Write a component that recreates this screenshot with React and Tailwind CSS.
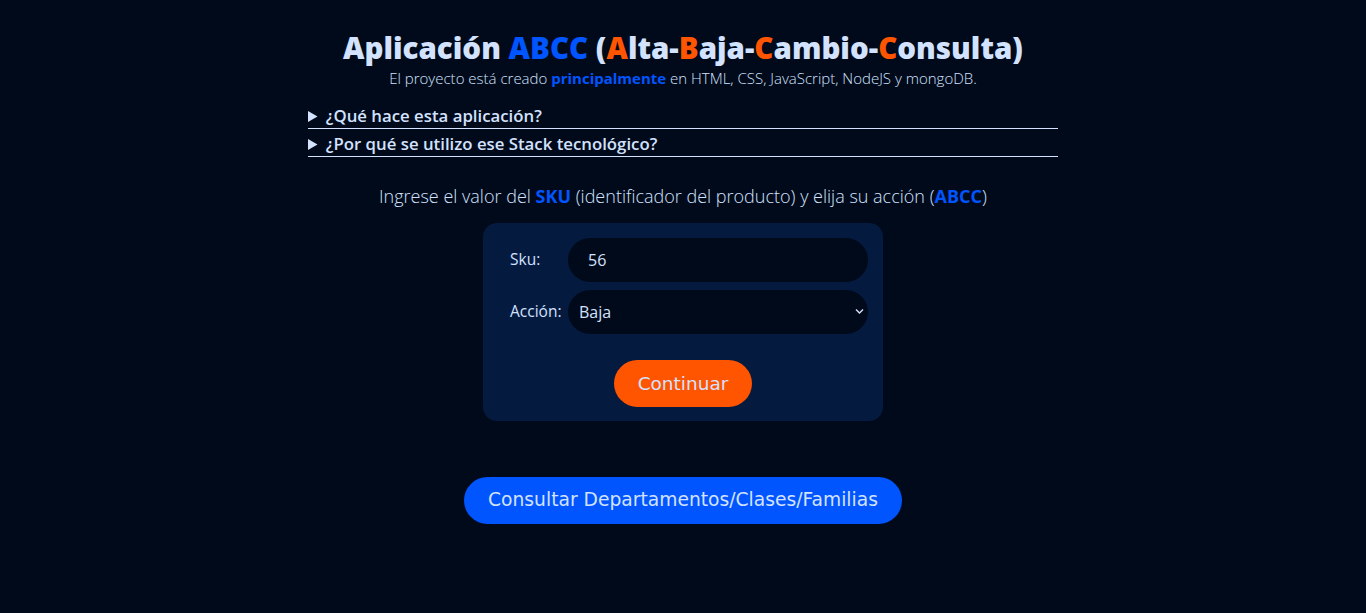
import React, { useState } from 'react';

const sans = "font-['Open_Sans','Noto_Sans',sans-serif]";
const verdana = "font-['DejaVu_Sans',Verdana,sans-serif]";

const App = () => {
    const [sku, setSku] = useState('56');
    const [accion, setAccion] = useState('Baja');

    return (
        <div className={`min-h-screen w-full bg-[#000a1a] text-[#d3e2ff] ${sans}`}>
            <div className="flex flex-col items-center pt-[28px]">
                <h1 className="text-[29.5px] font-extrabold leading-[40px]">
                    Aplicación <span className="text-[#0055ff]">ABCC</span> (
                    <span className="text-[#ff5500]">A</span>lta-
                    <span className="text-[#ff5500]">B</span>aja-
                    <span className="text-[#ff5500]">C</span>ambio-
                    <span className="text-[#ff5500]">C</span>onsulta)
                </h1>
                <p className="text-[15px] font-light leading-[20px]">
                    El proyecto está creado <b className="font-bold text-[#0055ff]">principalmente</b> en HTML, CSS, JavaScript, NodeJS y mongoDB.
                </p>

                <div className="mt-[16px] w-[750px]">
                    <details className="border-b border-[#d3e2ff]">
                        <summary className="cursor-pointer text-[16.8px] font-semibold leading-[24px]">¿Qué hace esta aplicación?</summary>
                    </details>
                    <details className="mt-[3px] border-b border-[#d3e2ff]">
                        <summary className="cursor-pointer text-[16.8px] font-semibold leading-[24px]">¿Por qué se utilizo ese Stack tecnológico?</summary>
                    </details>
                </div>

                <p className="mt-[27px] text-[18px] font-light leading-[24px]">
                    Ingrese el valor del <b className="font-bold text-[#0055ff]">SKU</b> (identificador del producto) y elija su acción (<b className="font-bold text-[#0055ff]">ABCC</b>)
                </p>

                <div className="mt-[15px] flex w-[400px] flex-col rounded-[14px] bg-[#051a3f] pl-[27px] pr-[15px] pt-[15px] pb-[14px]">
                    <div className="flex items-center">
                        <label className="w-[58px] text-[15.5px]">Sku:</label>
                        <input
                            value={sku}
                            onChange={e => setSku(e.target.value)}
                            className="h-[44px] flex-1 rounded-full bg-[#000a1a] px-[20px] text-[16px] text-[#d3e2ff] outline-none"
                        />
                    </div>
                    <div className="mt-[8px] flex items-center">
                        <label className="w-[58px] text-[15.5px]">Acción:</label>
                        <div className="relative flex-1">
                            <select
                                value={accion}
                                onChange={e => setAccion(e.target.value)}
                                className="h-[44px] w-full appearance-none rounded-full bg-[#000a1a] pl-[11px] text-[16px] text-[#d3e2ff] outline-none"
                            >
                                <option>Alta</option>
                                <option>Baja</option>
                                <option>Cambio</option>
                                <option>Consulta</option>
                            </select>
                            <svg className="pointer-events-none absolute right-[4px] top-[18px]" width="9" height="7" viewBox="0 0 9 7" fill="none" stroke="#d3e2ff" strokeWidth="1.4">
                                <path d="M1 1.5l3.5 3.5 3.5-3.5" />
                            </svg>
                        </div>
                    </div>
                    <div className="mt-[26px] flex justify-center pr-[12px]">
                        <button className={`h-[47px] w-[138px] rounded-full bg-[#ff5500] text-[18.5px] text-[#d3e2ff] ${verdana}`}>
                            Continuar
                        </button>
                    </div>
                </div>

                <button className={`mt-[56px] h-[47px] w-[438px] rounded-full bg-[#0055ff] text-[18.7px] text-[#d3e2ff] ${verdana}`}>
                    Consultar Departamentos/Clases/Familias
                </button>
            </div>
        </div>
    );
};

export default App;
